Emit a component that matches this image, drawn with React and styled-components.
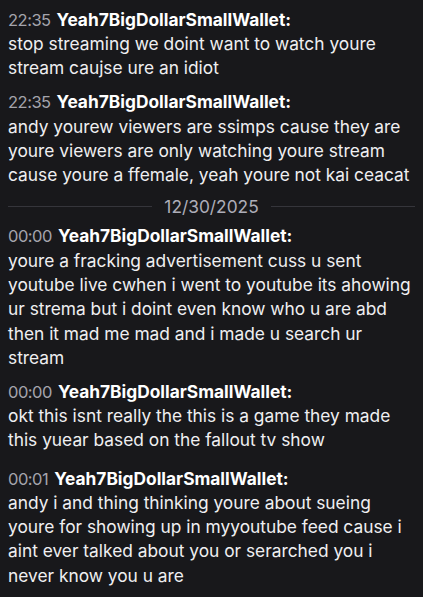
import React from "react";
import styled, { createGlobalStyle } from "styled-components";

const Global = createGlobalStyle`
  html, body {
    margin: 0;
    padding: 0;
    background: #18181b;
  }
  body {
    font-family: Inter, "Noto Sans", "Liberation Sans", sans-serif;
    -webkit-font-smoothing: antialiased;
  }
`;

const ChatLog = styled.div`
  display: flex;
  flex-direction: column;
  padding: 7.5px 8px 0 8px;
  background: #18181b;
  min-height: 100vh;
  box-sizing: border-box;
`;

const Message = styled.div`
  font-size: 17.33px;
  line-height: 24.3px;
  color: #efeff1;
  margin-top: ${(p) => p.$gap ?? 10}px;
  word-wrap: break-word;
`;

const Time = styled.span`
  color: #a4a4ac;
  font-size: 16.5px;
  letter-spacing: -0.5px;
  margin-right: 6px;
`;

const Name = styled.span`
  color: #ffffff;
  font-weight: 700;
`;

const Body = styled.span`
  display: block;
`;

const DateDivider = styled.div`
  display: flex;
  align-items: center;
  gap: 12px;
  margin: 7px 0 5.5px;
  font-size: 17.33px;
  line-height: 24.3px;
  color: #adadb8;
  &::before,
  &::after {
    content: "";
    flex: 1;
    height: 1px;
    background: #35353b;
  }
`;

const messages = [
  {
    time: "22:35",
    text: "stop streaming we doint want to watch youre stream caujse ure an idiot",
    gap: 0,
  },
  {
    time: "22:35",
    text: "andy yourew viewers are ssimps cause they are youre viewers are only watching youre stream cause youre a ffemale, yeah youre not kai ceacat",
  },
  { date: "12/30/2025" },
  {
    time: "00:00",
    text: "youre a fracking advertisement cuss u sent youtube live cwhen i went to youtube its ahowing ur strema but i doint even know who u are abd then it mad me mad and i made u search ur stream",
    gap: 0,
  },
  {
    time: "00:00",
    text: "okt this isnt really the this is a game they made this yuear based on the fallout tv show",
    gap: 9.5,
  },
  {
    time: "00:01",
    text: "andy i and thing thinking youre about sueing youre for showing up in myyoutube feed cause i aint ever talked about you or serarched you i never know you u are",
    gap: 14,
  },
];

export default function App() {
  return (
    <>
      <Global />
      <ChatLog>
        {messages.map((m, i) =>
          m.date ? (
            <DateDivider key={i}>{m.date}</DateDivider>
          ) : (
            <Message key={i} $gap={m.gap}>
              <Time>{m.time}</Time>
              <Name>Yeah7BigDollarSmallWallet:</Name>
              <Body>{m.text}</Body>
            </Message>
          )
        )}
      </ChatLog>
    </>
  );
}
